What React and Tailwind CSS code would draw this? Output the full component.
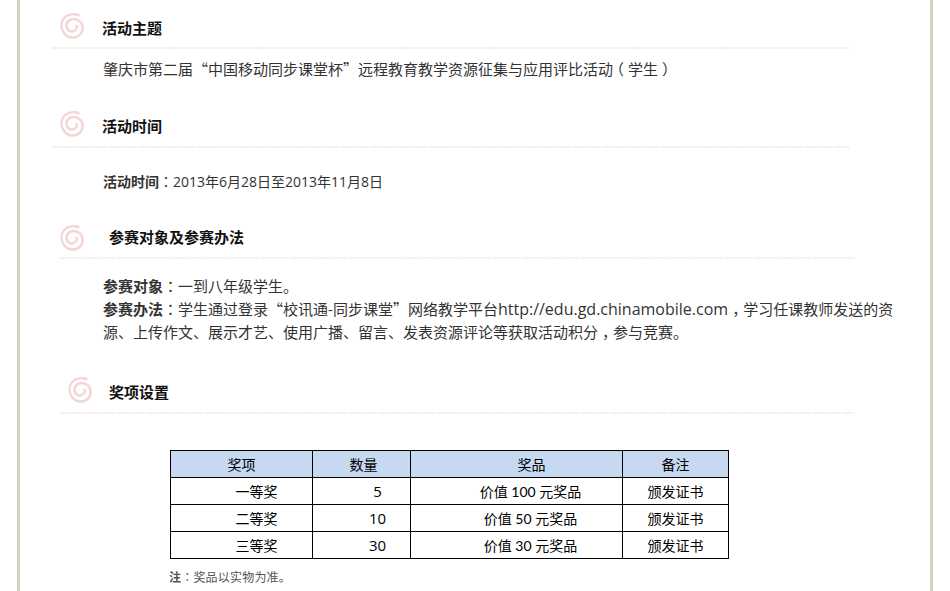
import React from "react";

const bodyFont = "[font-family:'Open_Sans','Noto_Sans_CJK_SC',sans-serif]";
const tableFont = "[font-family:'Lato','Noto_Sans_CJK_SC',sans-serif]";
const ruleBg =
  "bg-[repeating-linear-gradient(90deg,#f4f1ee_0,#f4f1ee_9px,#f9f7f6_9px,#f9f7f6_12px,#f5f2f0_12px,#f5f2f0_26px,#faf9f8_26px,#faf9f8_29px)]";

const prizes = [
  { name: "一等奖", count: "5", prize: "价值 100 元奖品" },
  { name: "二等奖", count: "10", prize: "价值 50 元奖品" },
  { name: "三等奖", count: "30", prize: "价值 30 元奖品" },
];

// centred colon, as the page's font draws it
const Colon = () => (
  <span className="[font-family:'Noto_Sans_CJK_TC',sans-serif] leading-none font-normal">：</span>
);

// full-width curly quotes
const Quote = ({ children }) => (
  <span className="[font-family:'Noto_Sans_CJK_SC',sans-serif] leading-none">{children}</span>
);

// comma sits in the middle of its cell in the reference
const Comma = () => (
  <span className="ml-[4px] -mr-[4px] [font-family:'Noto_Sans_CJK_SC',sans-serif] leading-none">，</span>
);

// pink spiral used in front of every section title
const Spiral = () => (
  <svg width="24" height="26" viewBox="0 0 24 26" fill="none" className="shrink-0">
    <path
      d="M18.5 2.2C14 0.2 6 1 2.8 7C-0.5 13.5 3 23.5 11.5 24.5C18.5 25.2 23 20 22.7 14.5C22.3 8.5 17 5.5 12.5 6C8.5 6.5 6 10 6.5 13.5C7 17 10 19 13 18.3C15.5 17.7 17.2 15.5 16.8 13"
      stroke="#f5d6d6"
      strokeWidth="2.5"
      strokeLinecap="round"
    />
  </svg>
);

const Heading = ({ title, headClass, textClass, ruleClass }) => (
  <div>
    <div className={`flex items-center ${headClass}`}>
      <Spiral />
      <h2 className={`text-[15px] leading-[22px] font-bold text-[#111] ${textClass}`}>{title}</h2>
    </div>
    <div className={`h-[2px] ${ruleBg} ${ruleClass}`} />
  </div>
);

export default function App() {
  return (
    <div className={`h-[591px] overflow-hidden bg-white pl-[17px] ${bodyFont}`}>
      <div className="h-full w-[916px] border-x-[3px] border-[#d0d0c4]">
        {/* 活动主题 */}
        <div className="pt-[13px]">
          <Heading
            title="活动主题"
            headClass="pl-[40px]"
            textClass="mt-[4px] ml-[18px]"
            ruleClass="mt-[8px] ml-[32px] w-[798px]"
          />
          <p className="mt-[9px] ml-[83px] text-[15px] leading-[22px] text-[#333]">
            肇庆市第二届<Quote>“</Quote>中国移动同步课堂杯<Quote>”</Quote>远程教育教学资源征集与应用评比活动
            <span className="-ml-[4px] mr-[4px] [font-family:'Noto_Sans_CJK_TC',sans-serif] leading-none">（</span>
            学生
            <span className="ml-[4px] -mr-[4px] [font-family:'Noto_Sans_CJK_TC',sans-serif] leading-none">）</span>
          </p>
        </div>

        {/* 活动时间 */}
        <div className="pt-[31px]">
          <Heading
            title="活动时间"
            headClass="pl-[40px]"
            textClass="mt-[4px] ml-[18px]"
            ruleClass="mt-[9px] ml-[32px] w-[798px]"
          />
          <p className="mt-[23px] ml-[83px] text-[14px] leading-[22px] text-[#333]">
            <b>活动时间</b><Colon />2013年6月28日至2013年11月8日
          </p>
        </div>

        {/* 参赛对象及参赛办法 */}
        <div className="pt-[32px]">
          <Heading
            title="参赛对象及参赛办法"
            headClass="pl-[40px]"
            textClass="-mt-[2px] ml-[25px]"
            ruleClass="mt-[6px] ml-[39px] w-[796px]"
          />
          <div className="mt-[16px] ml-[83px] w-[795px] text-[15px] leading-[23px] text-[#333]">
            <p>
              <b>参赛对象</b><Colon />一到八年级学生。
            </p>
            <p>
              <b>参赛办法</b><Colon />学生通过登录<Quote>“</Quote>校讯通-同步课堂<Quote>”</Quote>网络教学平台<span className="text-[16px] leading-none">http://edu.gd.chinamobile.com</span><Comma />学习任课教师发送的资源、上传作文、展示才艺、使用广播、留言、发表资源评论等获取活动积分<Comma />参与竞赛。
            </p>
          </div>
        </div>

        {/* 奖项设置 */}
        <div className="pt-[33px]">
          <Heading
            title="奖项设置"
            headClass="pl-[48px]"
            textClass="mt-[4px] ml-[17px]"
            ruleClass="mt-[9px] ml-[40px] w-[795px]"
          />
        </div>

        <table className={`mt-[36px] ml-[150px] w-[558px] table-fixed border-collapse text-[14px] text-black ${tableFont}`}>
          <colgroup>
            <col className="w-[142px]" />
            <col className="w-[98px]" />
            <col className="w-[212px]" />
            <col className="w-[106px]" />
          </colgroup>
          <thead>
            <tr className="h-[27px] bg-[#c6d9f0]">
              <th className="border border-black font-normal">奖项</th>
              <th className="border border-black pl-[4px] font-normal">数量</th>
              <th className="border border-black pl-[30px] font-normal">奖品</th>
              <th className="border border-black font-normal">备注</th>
            </tr>
          </thead>
          <tbody>
            {prizes.map((row) => (
              <tr key={row.name} className="h-[27px]">
                <td className="border border-black pl-[30px] text-center">{row.name}</td>
                <td className="border border-black pl-[32px] text-center text-[15px] [font-family:'Open_Sans',sans-serif]">{row.count}</td>
                <td className="border border-black pl-[28px] text-center">{row.prize}</td>
                <td className="border border-black text-center">颁发证书</td>
              </tr>
            ))}
          </tbody>
        </table>

        <p className="mt-[10px] ml-[149px] text-[12px] leading-[18px] tracking-[0.2px] text-[#555]">
          <b>注</b><Colon />奖品以实物为准。
        </p>
      </div>
    </div>
  );
}
